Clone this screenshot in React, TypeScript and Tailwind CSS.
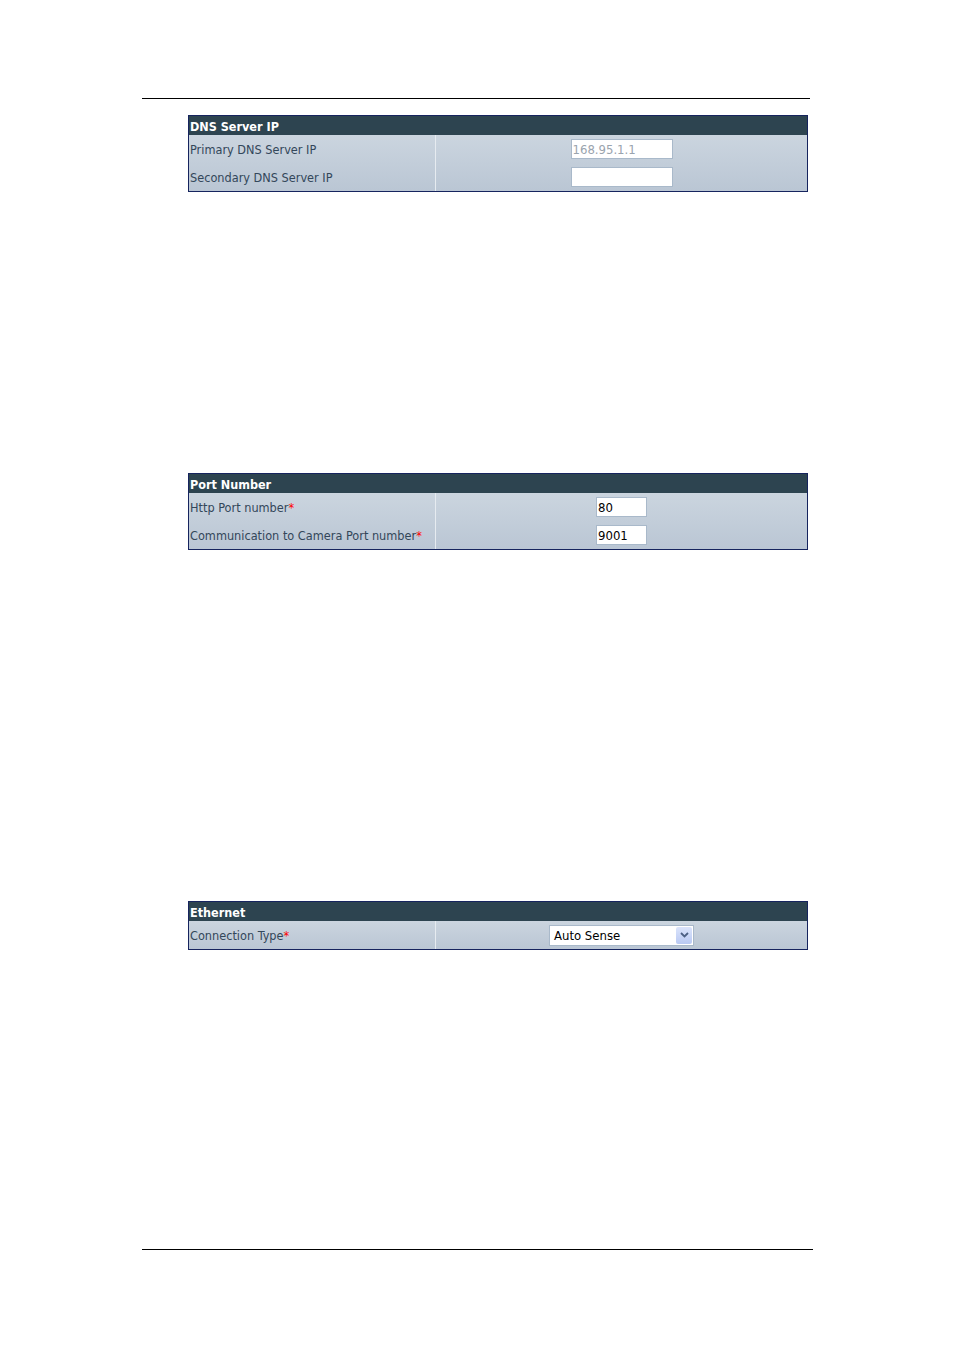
import type { FC, ReactNode } from 'react';

const font = { fontFamily: 'Tahoma, "DejaVu Sans Condensed", "Liberation Sans", sans-serif' };

const Star = () => <span className="text-[#ff0000]">*</span>;

const Row: FC<{ label: ReactNode; children: ReactNode }> = ({ label, children }) => (
  <div className="flex h-[28px]">
    <div className="w-[247px] flex items-center pl-[1px] pt-[2px] text-[12.6px] text-[#33475a] border-r border-[#e6ebf0]">
      {label}
    </div>
    <div className="flex-1 flex items-center justify-center">{children}</div>
  </div>
);

const Panel: FC<{ title: string; children: ReactNode }> = ({ title, children }) => (
  <div className="ml-[188px] w-[620px] border border-[#16245e]" style={font}>
    <div className="h-[19px] bg-[#2d4450] text-white text-[12.5px] font-bold flex items-center pl-[1px] pt-[3px]">
      {title}
    </div>
    <div className="bg-gradient-to-b from-[#cbd5df] to-[#bac6d4]">{children}</div>
  </div>
);

const TextBox: FC<{ value?: string; width: string; muted?: boolean }> = ({ value = '', width, muted }) => (
  <div
    className={`${width} h-[20px] bg-white border border-[#a9b9ca] flex items-center px-[1px] pt-[1px] text-[13px] ${
      muted ? 'text-[#9aa4ae]' : 'text-black'
    }`}
  >
    {value}
  </div>
);

export default function App() {
  return (
    <div className="w-[954px] h-[1351px] bg-white relative">
      <div className="pt-[98px]">
        <div className="ml-[142px] w-[668px] h-[1px] bg-black" />
      </div>

      <div className="mt-[16px]">
        <Panel title="DNS Server IP">
          <Row label="Primary DNS Server IP">
            <TextBox value="168.95.1.1" width="w-[102px]" muted />
          </Row>
          <Row label="Secondary DNS Server IP">
            <TextBox width="w-[102px]" />
          </Row>
        </Panel>
      </div>

      <div className="mt-[281px]">
        <Panel title="Port Number">
          <Row label={<>Http Port number<Star /></>}>
            <TextBox value="80" width="w-[51px]" />
          </Row>
          <Row label={<>Communication to Camera Port number<Star /></>}>
            <TextBox value="9001" width="w-[51px]" />
          </Row>
        </Panel>
      </div>

      <div className="mt-[351px]">
        <Panel title="Ethernet">
          <Row label={<>Connection Type<Star /></>}>
            <div className="w-[145px] h-[21px] bg-white border border-[#a9b9ca] flex items-center">
              <span className="flex-1 pl-[4px] pt-[1px] text-[13px] text-black">Auto Sense</span>
              <span className="w-[16px] h-[17px] mr-[1px] bg-gradient-to-b from-[#dbe4fb] to-[#b9c9f3] rounded-[2px] flex items-center justify-center">
                <svg width="9" height="6" viewBox="0 0 9 6">
                  <path d="M1 1 L4.5 4.5 L8 1" fill="none" stroke="#4d6185" strokeWidth="1.8" />
                </svg>
              </span>
            </div>
          </Row>
        </Panel>
      </div>

      <div className="absolute left-[142px] top-[1249px] w-[671px] h-[1px] bg-black" />
    </div>
  );
}
